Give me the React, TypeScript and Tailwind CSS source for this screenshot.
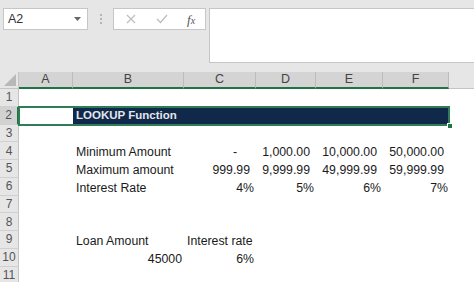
import React from "react";

const colWidths = ["w-[54px]", "w-[111px]", "w-[72px]", "w-[60px]", "w-[67px]", "w-[66px]"];
const colNames = ["A", "B", "C", "D", "E", "F"];

type Cell = { text: string; right?: boolean; pad?: string };

// row number -> cells for A..F
const data: Record<number, (Cell | null)[]> = {
  4: [
    null,
    { text: "Minimum Amount" },
    { text: "-", right: true, pad: "pr-[19px]" },
    { text: "1,000.00", right: true, pad: "pr-[6px]" },
    { text: "10,000.00", right: true, pad: "pr-[6px]" },
    { text: "50,000.00", right: true, pad: "pr-[5px]" },
  ],
  5: [
    null,
    { text: "Maximum amount" },
    { text: "999.99", right: true, pad: "pr-[6px]" },
    { text: "9,999.99", right: true, pad: "pr-[6px]" },
    { text: "49,999.99", right: true, pad: "pr-[6px]" },
    { text: "59,999.99", right: true, pad: "pr-[5px]" },
  ],
  6: [
    null,
    { text: "Interest Rate" },
    { text: "4%", right: true, pad: "pr-[2px]" },
    { text: "5%", right: true, pad: "pr-[2px]" },
    { text: "6%", right: true, pad: "pr-[2px]" },
    { text: "7%", right: true, pad: "pr-[1px]" },
  ],
  9: [null, { text: "Loan Amount" }, { text: "Interest rate" }, null, null, null],
  10: [
    null,
    { text: "45000", right: true, pad: "pr-[2px]" },
    { text: "6%", right: true, pad: "pr-[2px]" },
    null,
    null,
    null,
  ],
};

function RowHeader({ n, active }: { n: number; active?: boolean }) {
  return (
    <div
      className={`w-[19px] shrink-0 h-full flex items-center justify-center text-[12px] leading-none text-[#555] border-b border-[#d0d0d0] ${
        active ? "bg-[#d2d2d2] border-r-2 border-r-[#217346]" : "bg-[#e6e6e6] border-r border-r-[#c4c4c4]"
      }`}
    >
      {n}
    </div>
  );
}

function DataRow({ n }: { n: number }) {
  const cells = data[n] || [null, null, null, null, null, null];
  return (
    <div className="flex h-[17.75px]">
      <RowHeader n={n} />
      {cells.map((c, i) => (
        <div
          key={i}
          className={`${colWidths[i]} shrink-0 h-full flex items-end pb-[1px] whitespace-nowrap overflow-visible ${
            c?.right ? "justify-end" : "justify-start pl-[3px]"
          } ${c?.pad ?? ""}`}
        >
          {c && <span className="leading-[14px] text-[12.3px] text-[#1a1a1a]">{c.text}</span>}
        </div>
      ))}
      <div className="flex-1" />
    </div>
  );
}

export default function App() {
  return (
    <div className="w-[474px] h-[282px] overflow-hidden bg-white font-['Liberation_Sans',Arial,sans-serif]">
      {/* formula bar area */}
      <div className="h-[72px] bg-[#e6e6e6] flex items-start pt-[8px]">
        <div className="ml-[3px] w-[85px] h-[22px] bg-white border border-[#c6c6c6] flex items-center justify-between pl-[4px] pr-[6px]">
          <span className="text-[12.5px] text-[#333]">A2</span>
          <svg width="7" height="4" viewBox="0 0 7 4">
            <path d="M0 0 H7 L3.5 4 Z" fill="#666" />
          </svg>
        </div>
        <div className="w-[25px] h-[22px] flex flex-col items-center justify-center gap-[2px]">
          <span className="w-[2px] h-[2px] bg-[#b5b5b5]" />
          <span className="w-[2px] h-[2px] bg-[#b5b5b5]" />
          <span className="w-[2px] h-[2px] bg-[#b5b5b5]" />
        </div>
        <div className="w-[93px] h-[22px] bg-white border border-[#c6c6c6] flex items-center pl-[12px]">
          <svg width="10" height="10" viewBox="0 0 10 10">
            <path d="M1 1 L9 9 M9 1 L1 9" stroke="#bdbdbd" strokeWidth="1.2" />
          </svg>
          <svg width="12" height="10" viewBox="0 0 12 10" className="ml-[20px]">
            <path d="M1 5 L4.5 8.5 L11 1" stroke="#bdbdbd" strokeWidth="1.2" fill="none" />
          </svg>
          <span className="ml-[19px] font-['Liberation_Serif',serif] italic text-[13px] text-[#555] leading-none">
            f<span className="text-[10px]">x</span>
          </span>
        </div>
        <div className="ml-[3px] flex-1 h-[55px] bg-white border border-[#c6c6c6] border-r-0" />
      </div>

      {/* column headers */}
      <div className="flex h-[17px]">
        <div className="w-[19px] shrink-0 bg-[#e6e6e6] border-r border-b border-[#c4c4c4] flex items-end justify-end pr-[2px] pb-[2px]">
          <svg width="12" height="12" viewBox="0 0 12 12">
            <path d="M12 0 L12 12 L0 12 Z" fill="#b8b8b8" />
          </svg>
        </div>
        {colNames.map((c, i) => (
          <div
            key={c}
            className={`${colWidths[i]} shrink-0 bg-[#d4d4d4] border-r border-[#bcbcbc] border-b-2 border-b-[#217346] flex items-center justify-center text-[12.5px] text-[#444]`}
          >
            {c}
          </div>
        ))}
        <div className="flex-1 bg-[#e6e6e6] border-b border-[#c4c4c4]" />
      </div>

      {/* row 1 */}
      <DataRow n={1} />

      {/* row 2 with selection */}
      <div className="flex h-[17.75px]">
        <RowHeader n={2} active />
        <div className="relative flex">
          <div className="w-[54px] shrink-0" />
          <div className="w-[376px] shrink-0 bg-[#10284a] flex items-center pl-[3px]">
            <span className="text-[11.5px] font-bold text-[#e3e6ea] leading-none">LOOKUP Function</span>
          </div>
          <div className="absolute inset-[-1px] border-2 border-[#2f7d57]" />
          <div className="absolute right-[-4px] bottom-[-4px] w-[6px] h-[6px] bg-[#217346] border border-white" />
        </div>
        <div className="flex-1" />
      </div>

      {[3, 4, 5, 6, 7, 8, 9, 10, 11].map((n) => (
        <DataRow key={n} n={n} />
      ))}
    </div>
  );
}
